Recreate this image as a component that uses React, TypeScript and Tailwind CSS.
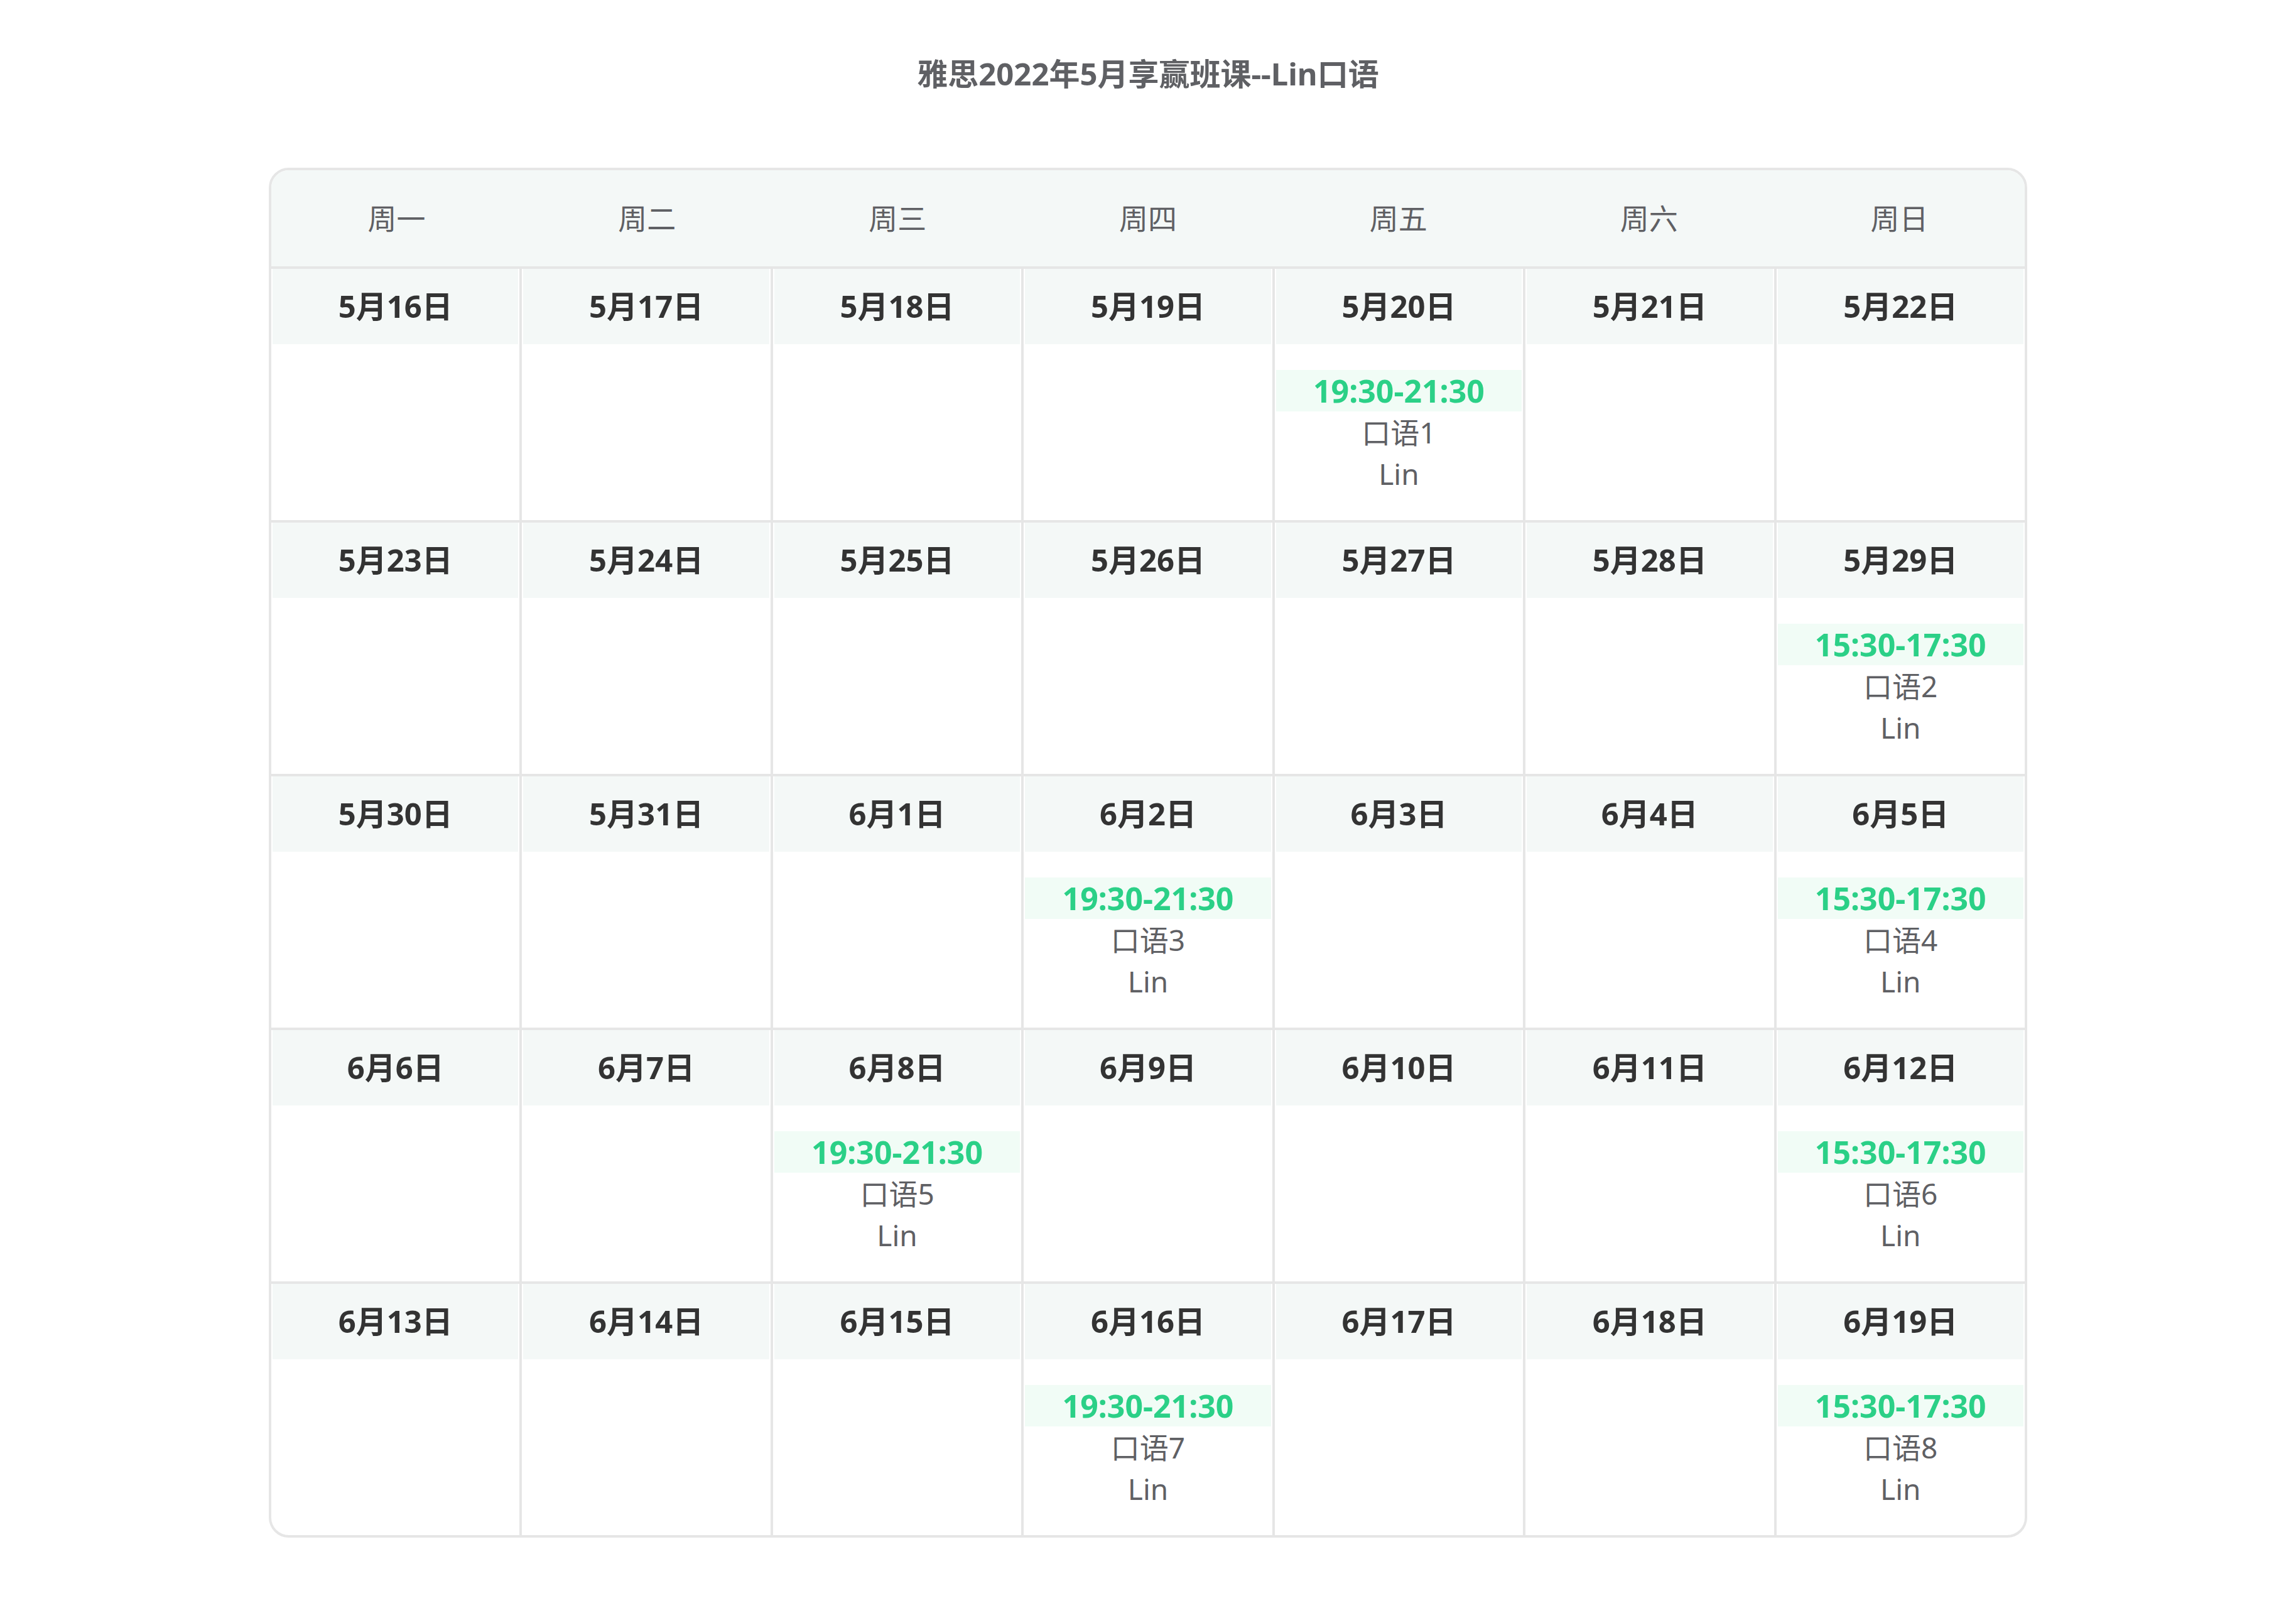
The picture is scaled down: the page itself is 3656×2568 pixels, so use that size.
const weekdays = ['周一', '周二', '周三', '周四', '周五', '周六', '周日'];

type Lesson = { time: string; name: string; teacher: string };

const weeks: { date: string; lesson?: Lesson }[][] = [
  [
    { date: '5月16日' },
    { date: '5月17日' },
    { date: '5月18日' },
    { date: '5月19日' },
    { date: '5月20日', lesson: { time: '19:30-21:30', name: '口语1', teacher: 'Lin' } },
    { date: '5月21日' },
    { date: '5月22日' },
  ],
  [
    { date: '5月23日' },
    { date: '5月24日' },
    { date: '5月25日' },
    { date: '5月26日' },
    { date: '5月27日' },
    { date: '5月28日' },
    { date: '5月29日', lesson: { time: '15:30-17:30', name: '口语2', teacher: 'Lin' } },
  ],
  [
    { date: '5月30日' },
    { date: '5月31日' },
    { date: '6月1日' },
    { date: '6月2日', lesson: { time: '19:30-21:30', name: '口语3', teacher: 'Lin' } },
    { date: '6月3日' },
    { date: '6月4日' },
    { date: '6月5日', lesson: { time: '15:30-17:30', name: '口语4', teacher: 'Lin' } },
  ],
  [
    { date: '6月6日' },
    { date: '6月7日' },
    { date: '6月8日', lesson: { time: '19:30-21:30', name: '口语5', teacher: 'Lin' } },
    { date: '6月9日' },
    { date: '6月10日' },
    { date: '6月11日' },
    { date: '6月12日', lesson: { time: '15:30-17:30', name: '口语6', teacher: 'Lin' } },
  ],
  [
    { date: '6月13日' },
    { date: '6月14日' },
    { date: '6月15日' },
    { date: '6月16日', lesson: { time: '19:30-21:30', name: '口语7', teacher: 'Lin' } },
    { date: '6月17日' },
    { date: '6月18日' },
    { date: '6月19日', lesson: { time: '15:30-17:30', name: '口语8', teacher: 'Lin' } },
  ],
];

const App = () => {
  return (
    <div className="min-h-screen bg-white font-['Noto_Sans','Noto_Sans_CJK_SC',sans-serif]">
      {/* Title */}
      <h1 className="pt-[81px] text-center text-[49px] leading-[72px] font-bold text-[#5f6064]">
        雅思2022年5月享赢班课--Lin口语
      </h1>

      {/* Calendar */}
      <div className="mx-auto mt-[114px] w-[2800px] overflow-hidden rounded-[32px] border-[4px] border-[#e6e6e6]">
        <div className="grid h-[157px] grid-cols-7 border-b-[4px] border-[#e6e6e6] bg-[#f4f8f7]">
          {weekdays.map((d) => (
            <div key={d} className="flex items-center justify-center text-[46px] text-[#5f6064]">
              {d}
            </div>
          ))}
        </div>

        <div className="grid grid-cols-7 gap-[4px] bg-[#e6e6e6]">
          {weeks.flat().map((cell) => (
            <div key={cell.date} className="flex h-[400px] flex-col bg-white">
              <div className="mx-[2px] flex h-[120px] items-center justify-center bg-[#f4f8f7] text-[49px] font-bold text-[#333333]">
                {cell.date}
              </div>
              <div className="flex flex-1 flex-col justify-center">
                {cell.lesson && (
                  <>
                    <div className="mx-[2px] flex h-[66px] items-center justify-center bg-[#f1fcf6] text-[50px] font-bold text-[#2bd087]">
                      {cell.lesson.time}
                    </div>
                    <div className="flex h-[66px] items-center justify-center text-[46px] text-[#5f6064]">
                      {cell.lesson.name}
                    </div>
                    <div className="flex h-[66px] items-center justify-center text-[46px] text-[#5f6064]">
                      {cell.lesson.teacher}
                    </div>
                  </>
                )}
              </div>
            </div>
          ))}
        </div>
      </div>
    </div>
  );
};

export default App;
